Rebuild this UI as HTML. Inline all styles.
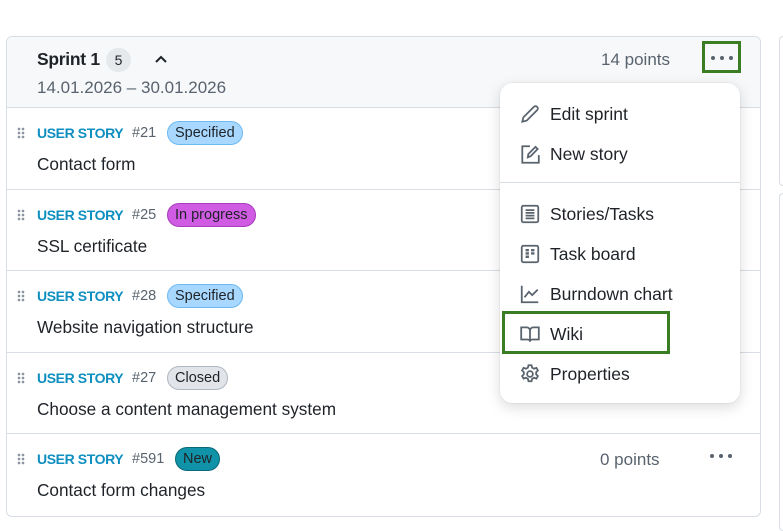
<!DOCTYPE html>
<html><head><meta charset="utf-8"><style>
*{box-sizing:border-box;margin:0;padding:0}
body{width:783px;height:531px;background:#fff;font-family:"Liberation Sans",sans-serif;color:#1f2328;position:relative;overflow:hidden}
.card{position:absolute;left:6px;top:36px;width:755px;height:481px;border:1px solid #d8dee4;border-radius:6px;overflow:hidden}
.hdr{height:71px;background:#f6f8fa;border-bottom:1px solid #d8dee4;position:relative}
.ttl{position:absolute;left:30px;top:12px;font-size:17.5px;font-weight:bold;letter-spacing:-.3px}
.cnt{position:absolute;left:99px;top:11px;width:25px;height:24px;border-radius:12px;background:#e6e9ec;font-size:14px;text-align:center;line-height:24px}
.dates{position:absolute;left:30px;top:41px;font-size:17px;color:#59636e}
.pts{position:absolute;left:594px;top:13px;font-size:17px;color:#59636e}
.row{height:81.6px;border-bottom:1px solid #d8dee4;position:relative}
.row:last-child{border-bottom:none}
.grip{position:absolute;left:10px;top:19px;width:8px;height:12px;background:radial-gradient(circle,#8c959f 1.2px,transparent 1.5px) 0 0/4px 4px}
.type{position:absolute;left:30px;top:17px;font-size:14px;color:#0e8fc0;font-weight:bold;letter-spacing:-.4px}
.num{position:absolute;left:125px;top:17px;font-size:14.5px;color:#59636e}
.b{position:absolute;top:13px;height:24px;border-radius:12px;font-size:14.5px;line-height:22px;padding:0 7px;border:1px solid}
.t{position:absolute;left:30px;top:46px;font-size:17.2px}
.menu{position:absolute;left:500px;top:83px;width:240px;height:320px;background:#fff;border-radius:12px;box-shadow:0 4px 14px rgba(0,0,0,.15),0 0 1px rgba(0,0,0,.2)}
.mi{position:absolute;left:19px;font-size:17.5px;display:flex;align-items:center;gap:9px}
.mi svg{width:22px;height:22px;stroke:#59636e;fill:none;stroke-width:1.6}
.dots span{display:inline-block;width:4px;height:4px;border-radius:2px;background:#59636e;margin-right:5px}
</style></head><body>
<div style="position:absolute;left:779px;top:36px;width:4px;height:150px;border:1px solid #d8dee4;border-right:none;border-radius:6px 0 0 6px"></div>
<div style="position:absolute;left:779px;top:193px;width:4px;height:338px;border:1px solid #d8dee4;border-right:none;border-radius:6px 0 0 6px"></div>
<div class="card">
 <div class="hdr">
  <div class="ttl">Sprint 1</div><div class="cnt">5</div>
  <svg style="position:absolute;left:147px;top:17px" width="14" height="10" viewBox="0 0 14 10"><path d="M2 8L7 3L12 8" stroke="#1f2328" stroke-width="2" fill="none"/></svg>
  <div class="dates">14.01.2026 – 30.01.2026</div>
  <div class="pts">14 points</div>
  <div style="position:absolute;left:695px;top:4px;width:39px;height:32px;border:3px solid #3a7d22"></div>
  <div class="dots" style="position:absolute;left:704px;top:19px;font-size:0"><span></span><span></span><span style="margin:0"></span></div>
 </div>
 <div class="row"><div class="grip"></div><div class="type">USER STORY</div><div class="num">#21</div><div class="b" style="left:160px;background:#a8d8ff;border-color:#6cb9f0">Specified</div><div class="t">Contact form</div></div>
 <div class="row"><div class="grip"></div><div class="type">USER STORY</div><div class="num">#25</div><div class="b" style="left:160px;background:#d05ce3;border-color:#a83cbd">In progress</div><div class="t">SSL certificate</div></div>
 <div class="row"><div class="grip"></div><div class="type">USER STORY</div><div class="num">#28</div><div class="b" style="left:160px;background:#a8d8ff;border-color:#6cb9f0">Specified</div><div class="t">Website navigation structure</div></div>
 <div class="row"><div class="grip"></div><div class="type">USER STORY</div><div class="num">#27</div><div class="b" style="left:160px;background:#e1e4e8;border-color:#afb8c1">Closed</div><div class="t">Choose a content management system</div></div>
 <div class="row"><div class="grip"></div><div class="type">USER STORY</div><div class="num">#591</div><div class="b" style="left:168px;background:#1093a8;border-color:#0a6878">New</div><div class="t">Contact form changes</div>
  <div style="position:absolute;left:593px;top:16px;font-size:17px;color:#59636e">0 points</div>
  <div class="dots" style="position:absolute;left:703px;top:20px;font-size:0"><span></span><span></span><span style="margin:0"></span></div>
 </div>
</div>
<div class="menu">
 <div class="mi" style="top:20px"><svg viewBox="0 0 20 20"><path d="M3 17l1-4L13.5 3.5a2 2 0 013 3L7 16z"/></svg>Edit sprint</div>
 <div class="mi" style="top:60px"><svg viewBox="0 0 20 20"><path d="M10 3H3v15h15v-7"/><path d="M8 13l.5-3L15 3.5l2 2L10.5 12z"/></svg>New story</div>
 <div style="position:absolute;left:0;right:0;top:99px;border-top:1px solid #d8dee4"></div>
 <div class="mi" style="top:120px"><svg viewBox="0 0 20 20"><rect x="2.5" y="2.5" width="15" height="15" rx="1.5"/><path d="M6 6.5h8M6 9h8M6 11.5h8M6 14h8"/></svg>Stories/Tasks</div>
 <div class="mi" style="top:160px"><svg viewBox="0 0 20 20"><rect x="2.5" y="2.5" width="15" height="15" rx="1.5"/><path d="M6 6.5h3M11 6.5h3M6 9.5h3M11 9.5h3M6 12.5h3" stroke-width="2.2"/></svg>Task board</div>
 <div class="mi" style="top:200px"><svg viewBox="0 0 20 20"><path d="M2.5 2.5v15h15"/><path d="M5 13l4-5 3 3 5-5"/></svg>Burndown chart</div>
 <div class="mi" style="top:240px"><svg viewBox="0 0 20 20"><path d="M2 4h5a3 3 0 013 3v10a2 2 0 00-2-2H2zM18 4h-5a3 3 0 00-3 3v10a2 2 0 012-2h6z"/></svg>Wiki</div>
 <div style="position:absolute;left:2px;top:228px;width:168px;height:43px;border:3px solid #3a7d22"></div>
 <div class="mi" style="top:280px"><svg viewBox="0 0 20 20"><circle cx="10" cy="10" r="2.6"/><path d="M8.6 2h2.8l.5 2.2 1.8 1 2.1-.8 1.4 2.4-1.6 1.5v2l1.6 1.5-1.4 2.4-2.1-.8-1.8 1-.5 2.2H8.6l-.5-2.2-1.8-1-2.1.8-1.4-2.4 1.6-1.5v-2L2.8 6.8l1.4-2.4 2.1.8 1.8-1z"/></svg>Properties</div>
</div>
</body></html>
